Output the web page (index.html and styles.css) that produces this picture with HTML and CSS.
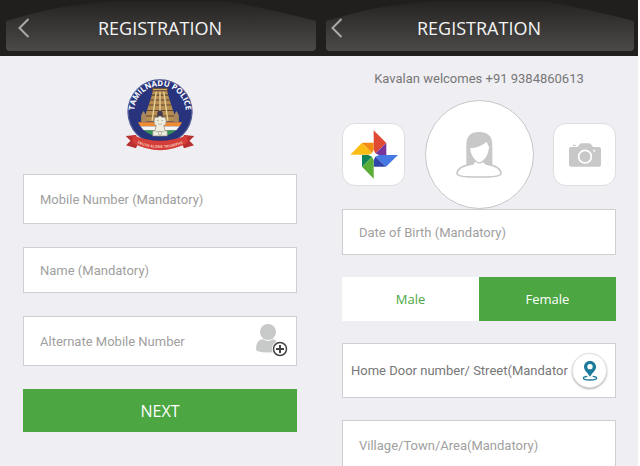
FILE: index.html
```html
<!DOCTYPE html>
<html lang="en">
<head>
    <meta charset="UTF-8">
    <meta name="viewport" content="width=device-width, initial-scale=1.0">
    <title>Registration</title>
    <link rel="stylesheet" href="styles.css">
</head>
<body>

<main class="screens">
    <!-- Step 1: contact numbers -->
    <section class="screen">
        <header class="topbar">
            <svg class="topbar-panel" viewBox="0 0 320 56" preserveAspectRatio="none" aria-hidden="true">
                <defs>
                    <linearGradient id="panel" x1="0" y1="0" x2="0" y2="1">
                        <stop offset="0" stop-color="#242322"/>
                        <stop offset="1" stop-color="#4b4a49"/>
                    </linearGradient>
                </defs>
                <path fill="url(#panel)" d="M6 21Q60 4 115 1H225Q265 8 316 21V47Q316 51 312 51H10Q6 51 6 47Z"/>
            </svg>
            <button type="button" class="back-btn wide" aria-label="Back">
                <svg width="12" height="20" viewBox="0 0 12 20"><path d="M10.500 1L1.500 10L10.500 19" fill="none" stroke="#aaa" stroke-width="2"/></svg>
            </button>
            <h1>REGISTRATION</h1>
        </header>

        <form class="form contact-form">
            <svg class="emblem" viewBox="0 0 204 210" role="img" aria-label="Tamilnadu Police">
                <defs>
                    <path id="arc" d="M33 125A75 75 0 1 1 171 125"/>
                    <path id="ribbon" d="M30 186Q102 217 174 186"/>
                    <clipPath id="inner"><circle cx="102" cy="96" r="71"/></clipPath>
                </defs>
                <circle cx="102" cy="96" r="95" fill="#27347d"/>
                <circle cx="102" cy="96" r="93" fill="none" stroke="#b9bbd2" stroke-width="1"/>
                <g clip-path="url(#inner)">
                    <rect x="20" y="126" width="164" height="12" fill="#ef8b32"/>
                    <rect x="20" y="138" width="164" height="12" fill="#f6f4ee"/>
                    <rect x="20" y="150" width="164" height="20" fill="#349353"/>
                </g>
                <path d="M81 34H123L127 52L151 124H53L77 52Z" fill="#b58d50"/>
                <path d="M80 34V27H124V34ZM77 47H127M73 61H131M69 76H135M64 92H140M59 108H145" fill="#d0aa66" stroke="#604632" stroke-width="3"/>
                <path d="M91 37L79 122M102 37V122M113 37L125 122" stroke="#ead196" stroke-width="4"/>
                <path d="M94 122V98Q102 86 110 98V122Z" fill="#423b51"/>
                <path d="M47 105L54 93L61 105V126H47ZM143 105L150 93L157 105V126H143Z" fill="#a8875e"/>
                <path d="M85 121Q86 109 95 112Q102 104 109 112Q118 109 120 121Q121 132 113 136L117 151H123V166H81V151H87L91 136Q83 131 85 121Z" fill="#eeecdc" stroke="#8e8d8a" stroke-width="2"/>
                <path d="M92 121H98M106 121H112M96 130Q102 135 108 130M88 153H116" fill="none" stroke="#a5a69c" stroke-width="2"/>
                <circle cx="102" cy="158" r="5" fill="none" stroke="#9d9d92" stroke-width="2"/>
                <path d="M2 166L32 163L39 186L32 202L3 193L16 180ZM202 166L172 163L165 186L172 202L201 193L188 180Z" fill="#b92f2f"/>
                <path d="M22 163Q102 197 182 163V187Q102 229 22 187Z" fill="#d53d38"/>
                <text class="emblem-name"><textPath href="#arc" startOffset="50%" text-anchor="middle">TAMILNADU POLICE</textPath></text>
                <text class="emblem-motto"><textPath href="#ribbon" startOffset="50%" text-anchor="middle">TRUTH ALONE TRIUMPHS</textPath></text>
            </svg>

            <div class="field medium">
                <input type="tel" placeholder="Mobile Number (Mandatory)" aria-label="Mobile Number">
            </div>
            <div class="field">
                <input type="text" placeholder="Name (Mandatory)" aria-label="Name">
            </div>
            <div class="field medium">
                <input type="tel" placeholder="Alternate Mobile Number" aria-label="Alternate Mobile Number">
                <button type="button" class="contact-btn" aria-label="Pick from contacts">
                    <svg width="34" height="36" viewBox="0 0 34 36">
                        <circle cx="13" cy="9" r="8" fill="#c8caca"/>
                        <path d="M1 26Q1 17 8 16Q13 20 18 16Q24 18 24 28Q12 31 2 28Z" fill="#c8caca"/>
                        <circle cx="25" cy="26" r="8" fill="#fff"/>
                        <circle cx="25" cy="26" r="6.500" fill="#fff" stroke="#444" stroke-width="1.500"/>
                        <path d="M25 22V30M21 26H29" stroke="#444" stroke-width="2"/>
                    </svg>
                </button>
            </div>
            <button type="submit" class="next-btn">NEXT</button>
        </form>
    </section>

    <!-- Step 2: personal details -->
    <section class="screen details">
        <header class="topbar">
            <svg class="topbar-panel" viewBox="0 0 320 56" preserveAspectRatio="none" aria-hidden="true">
                <path fill="url(#panel)" d="M6 21Q60 4 115 1H225Q265 8 316 21V47Q316 51 312 51H10Q6 51 6 47Z"/>
            </svg>
            <button type="button" class="back-btn" aria-label="Back">
                <svg width="12" height="20" viewBox="0 0 12 20"><path d="M10.500 1L1.500 10L10.500 19" fill="none" stroke="#aaa" stroke-width="2"/></svg>
            </button>
            <h1>REGISTRATION</h1>
        </header>

        <form class="form">
            <p class="welcome">Kavalan welcomes +91 9384860613</p>

            <div class="photo-row">
                <button type="button" class="tile" aria-label="Choose from photos">
                    <svg width="50" height="50" viewBox="43 106 150 150">
                        <path d="M117 107L155 145L117 181Z" fill="#e04a35"/>
                        <path d="M155 145V181H117Z" fill="#77349a"/>
                        <path d="M47 180L82 144L117 180Z" fill="#fbbc13"/>
                        <path d="M82 144H117V180Z" fill="#f28c13"/>
                        <path d="M117 181H190L154 216Z" fill="#4479e4"/>
                        <path d="M117 181L154 216H117Z" fill="#3046ad"/>
                        <path d="M117 252L82 216L117 181Z" fill="#5aae37"/>
                        <path d="M82 181H117L82 216Z" fill="#128257"/>
                        <path d="M117 165L122 176L133 181L122 186L117 197L112 186L101 181L112 176Z" fill="#fff"/>
                    </svg>
                </button>
                <div class="avatar">
                    <svg width="48" height="48" viewBox="0 0 144 144" role="img" aria-label="Profile photo">
                        <path d="M34 108V42Q34 3 72 3Q112 3 112 42V108L85 96V88Q100 76 104 51Q98 42 95 32Q79 49 42 52Q47 77 60 88V96Z" fill="#c8c8c8"/>
                        <path d="M43 50Q46 79 64 92Q73 99 83 92Q101 79 104 50" fill="none" stroke="#c8c8c8" stroke-width="4"/>
                        <path d="M48 102Q7 108 6 130Q6 138 72 138T138 130Q137 108 97 102Q74 108 48 102Z" fill="#fff"/>
                        <path d="M56 98Q7 106 6 128Q6 138 72 138T138 128Q137 106 90 98" fill="none" stroke="#c8c8c8" stroke-width="5"/>
                    </svg>
                </div>
                <button type="button" class="tile" aria-label="Take a photo">
                    <svg width="32" height="24" viewBox="0 0 96 72">
                        <path d="M6 12H26L32 4Q34 1 38 1H60Q64 1 66 4L72 12H90Q96 12 96 18V65Q96 71 90 71H6Q0 71 0 65V18Q0 12 6 12ZM12 5H20V9H12Z" fill="#c8c8c8"/>
                        <circle cx="48" cy="41" r="19" fill="#c8c8c8" stroke="#fff" stroke-width="5"/>
                        <circle cx="76" cy="23" r="3" fill="#fff"/>
                    </svg>
                </button>
            </div>

            <div class="field">
                <input type="text" placeholder="Date of Birth (Mandatory)" aria-label="Date of Birth">
            </div>
            <div class="gender">
                <button type="button" aria-pressed="false">Male</button>
                <button type="button" class="selected" aria-pressed="true">Female</button>
            </div>
            <div class="field tall">
                <input type="text" placeholder="Home Door number/ Street(Mandatory)" aria-label="Home Door number or Street">
                <button type="button" class="locate-btn" aria-label="Use my location">
                    <svg width="16" height="20" viewBox="0 0 48 60">
                        <path fill-rule="evenodd" d="M24 0C13 0 6 8 6 18C6 28 16 34 24 47C32 34 42 28 42 18C42 8 35 0 24 0ZM24 9A8 8 0 1 1 24 25A8 8 0 1 1 24 9Z" fill="#1c7a9a"/>
                        <path d="M16 46Q4 47 4 51Q4 57 24 57T44 51Q44 47 32 46" fill="none" stroke="#1c7a9a" stroke-width="4"/>
                    </svg>
                </button>
            </div>
            <div class="field medium">
                <input type="text" placeholder="Village/Town/Area(Mandatory)" aria-label="Village, Town or Area">
            </div>
        </form>
    </section>
</main>

</body>
</html>
```
FILE: styles.css
```css
* {
    box-sizing: border-box;
}

html {
    scrollbar-width: none;
}

body {
    margin: 0;
    background-color: #efeef3;
    font-family: "Open Sans", sans-serif;
    font-size: 13px;
}

button,
input {
    font: inherit;
    border: none;
    padding: 0;
}

button {
    cursor: pointer;
}

svg {
    display: block;
}

.screens {
    display: grid;
    grid-template-columns: 1fr 1fr;
    min-height: 100vh;
}

.screen {
    min-width: 0;
}

.details {
    border-right: 2px solid #fff;
}

.topbar {
    position: relative;
    display: flex;
    align-items: center;
    justify-content: center;
    height: 56px;
    background-color: #211f1e;
}

.topbar-panel {
    position: absolute;
    inset: 0;
    width: 100%;
    height: 100%;
}

.topbar h1 {
    position: relative;
    margin: 0;
    color: #f4f4f4;
    font-size: 18px;
    font-weight: 400;
}

.back-btn {
    position: absolute;
    left: 11px;
    top: 18px;
    background: none;
}

.back-btn.wide {
    left: 18px;
}

.form {
    display: flex;
    flex-direction: column;
    gap: 22px;
    padding: 0 22px;
}

.contact-form {
    gap: 23px;
    padding: 23px 23px 0;
}

.emblem {
    align-self: center;
    width: 70px;
    height: 72px;
    overflow: visible;
}

.emblem-name {
    fill: #fff;
    font-size: 23px;
    font-weight: 700;
}

.emblem-motto {
    fill: #f3c2b6;
    font-size: 11px;
    font-weight: 700;
}

.field {
    display: flex;
    align-items: center;
    height: 46px;
    padding: 0 16px;
    background-color: #fff;
    border: 1px solid #cfcfd2;
}

.field.medium {
    height: 50px;
}

.field.tall {
    gap: 4px;
    height: 55px;
    padding: 0 8px;
}

.field input {
    flex: 1;
    min-width: 0;
    height: 100%;
    background: none;
    outline: none;
    font-family: Roboto, sans-serif;
}

.field input::placeholder {
    color: #a0a0a0;
    opacity: 1;
}

.field.tall input::placeholder {
    color: #777;
}

.contact-btn {
    margin-right: -9px;
    background: none;
}

.next-btn {
    height: 43px;
    background-color: #4ca642;
    color: #fff;
    font-size: 16px;
}

.welcome {
    margin: 14px 0 -10px;
    color: #777;
    font-family: Roboto, sans-serif;
    line-height: 18px;
    text-align: center;
}

.photo-row {
    display: flex;
    align-items: center;
    justify-content: space-between;
    margin-bottom: -22px;
}

.tile {
    display: flex;
    align-items: center;
    justify-content: center;
    width: 63px;
    height: 63px;
    background-color: #fff;
    border: 1px solid #dedee0;
    border-radius: 13px;
}

.avatar {
    display: flex;
    align-items: center;
    justify-content: center;
    width: 109px;
    height: 109px;
    background-color: #fff;
    border: 1px solid #c6c6c8;
    border-radius: 50%;
}

.gender {
    display: grid;
    grid-template-columns: 1fr 1fr;
    height: 44px;
}

.gender button {
    background-color: #fff;
    color: #4ca642;
}

.gender .selected {
    background-color: #4ca642;
    color: #fff;
}

.locate-btn {
    display: flex;
    align-items: center;
    justify-content: center;
    width: 35px;
    height: 35px;
    background-color: #fff;
    border: 1px solid #e2e2e2;
    border-radius: 50%;
    box-shadow: 0 1px 2px #aaa;
}
```
